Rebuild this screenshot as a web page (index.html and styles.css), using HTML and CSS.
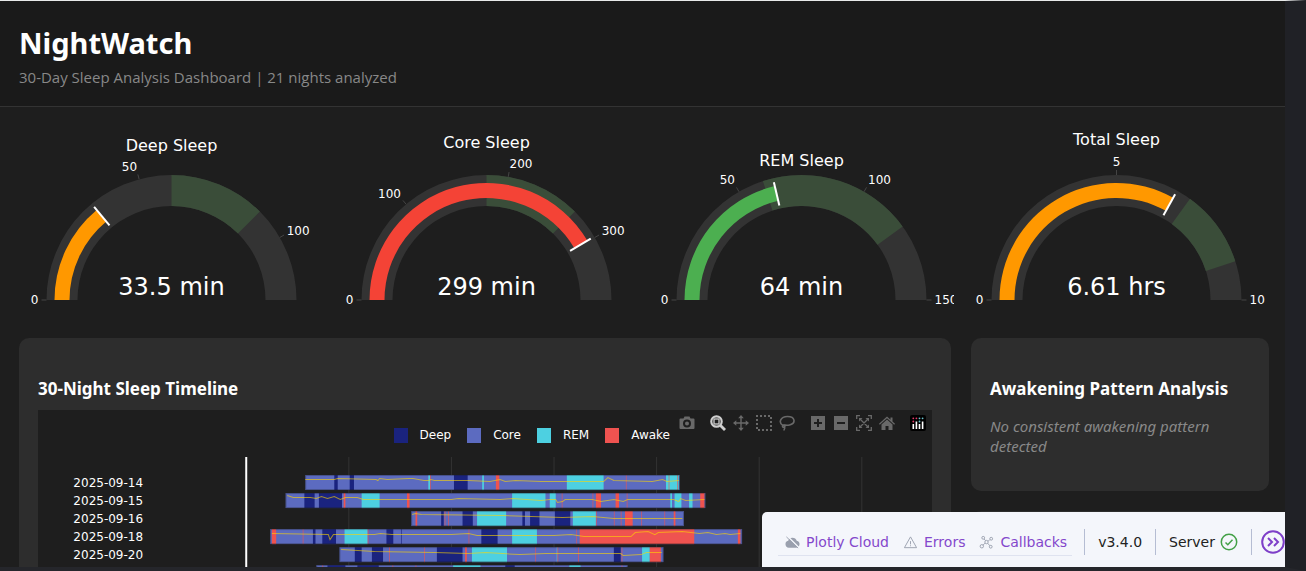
FILE: index.html
```html
<!DOCTYPE html>
<html lang="en">
<head>
    <meta charset="UTF-8">
    <meta name="viewport" content="width=device-width, initial-scale=1.0">
    <title>NightWatch</title>
    <link rel="stylesheet" href="styles.css">
</head>
<body>
    <div class="app">
        <header class="header">
            <h1>NightWatch</h1>
            <p>30-Day Sleep Analysis Dashboard | 21 nights analyzed</p>
        </header>

        <section class="gauges" id="gauges"></section>

        <main class="content">
            <section class="card">
                <h3>30-Night Sleep Timeline</h3>
                <div class="plot">
                    <div class="plot-head">
                        <ul class="legend">
                            <li><span class="swatch deep"></span>Deep</li>
                            <li><span class="swatch core"></span>Core</li>
                            <li><span class="swatch rem"></span>REM</li>
                            <li><span class="swatch awake"></span>Awake</li>
                        </ul>
                        <div class="modebar">
                            <div class="group">
                                <button aria-label="Download plot as png"><svg viewBox="0 0 16 16"><path fill-rule="evenodd" d="M1.500 3.500h3l1-2h5l1 2h3a1 1 0 0 1 1 1v8.500a1 1 0 0 1-1 1h-13a1 1 0 0 1-1-1V4.500a1 1 0 0 1 1-1zM8 4.500a4 4 0 1 0 0 8 4 4 0 0 0 0-8zm0 2a2 2 0 1 1 0 4 2 2 0 0 1 0-4z"/></svg></button>
                            </div>
                            <div class="group">
                                <button class="active" aria-label="Zoom"><svg viewBox="0 0 16 16"><circle cx="6.500" cy="6.500" r="5.200" fill="none" stroke="currentColor" stroke-width="2.200"/><path d="M9.500 11.500l2-2 4.500 4.500-2 2z"/><rect x="4" y="4" width="5" height="5" fill="none" stroke="currentColor" stroke-width="1.300"/></svg></button>
                                <button aria-label="Pan"><svg viewBox="0 0 16 16"><path d="M8 0l2.800 3.300H8.700v4h4V5.200L16 8l-3.300 2.800V8.700h-4v4h2.100L8 16l-2.800-3.300h2.100v-4h-4v2.100L0 8l3.300-2.800v2.100h4v-4H5.200z"/></svg></button>
                                <button aria-label="Box Select"><svg viewBox="0 0 16 16"><rect x="1" y="1" width="14" height="14" fill="none" stroke="currentColor" stroke-width="2" stroke-dasharray="2 2" stroke-dashoffset="1"/></svg></button>
                                <button aria-label="Lasso Select"><svg viewBox="0 0 16 16"><path fill="none" stroke="currentColor" stroke-width="1.600" d="M4 10.500C-1 7.500 1.500 1.500 8.500 1.500c8 0 8.500 7 2 8.500-3 .7-4.500 0-5.500 0-2 0-2 2.700 0 2.200 1.500-.4 1-2.500-1-2M5.500 12c.7 1.500-.5 2-.5 3.500"/></svg></button>
                            </div>
                            <div class="group">
                                <button aria-label="Zoom in"><svg viewBox="0 0 16 16"><path fill-rule="evenodd" d="M1 1h14v14H1zM7 4v3H4v2h3v3h2V9h3V7H9V4z"/></svg></button>
                                <button aria-label="Zoom out"><svg viewBox="0 0 16 16"><path fill-rule="evenodd" d="M1 1h14v14H1zM4 7v2h8V7z"/></svg></button>
                                <button aria-label="Autoscale"><svg viewBox="0 0 16 16"><path fill="none" stroke="currentColor" stroke-width="1.300" d="M.7 4V.7H4M12 .7h3.300V4M15.300 12v3.300H12M4 15.300H.7V12M4 4l8 8M12 4l-8 8"/><path d="M3 3h3.500L3 6.500zM13 3v3.500L9.500 3zM13 13H9.500L13 9.500zM3 13V9.500L6.500 13z"/></svg></button>
                                <button aria-label="Reset axes"><svg viewBox="0 0 16 16"><path d="M8 1.500l3.500 3.200V2.500h2v4L16 8.800l-.8.900L8 3.200.8 9.700 0 8.800zM8 4.500l5.500 5V15H9.500v-4h-3v4H2.500V9.500z"/></svg></button>
                            </div>
                            <div class="group">
                                <button aria-label="Produced with Plotly"><svg viewBox="0 0 16 16"><rect width="16" height="16" rx="2" fill="#000"/><g fill="#fff"><rect x="2.500" y="9" width="1.600" height="5"/><rect x="5.600" y="6.500" width="1.600" height="7.500"/><rect x="8.700" y="9" width="1.600" height="5"/><rect x="11.800" y="6.500" width="1.600" height="7.500"/></g><g fill="#e5396b"><circle cx="3.300" cy="3.300" r=".9"/><circle cx="3.300" cy="6.500" r=".9"/><circle cx="6.400" cy="3.300" r=".9"/></g><g fill="#6bc5cf"><circle cx="9.500" cy="3.300" r=".9"/><circle cx="9.500" cy="6.500" r=".9"/><circle cx="12.600" cy="3.300" r=".9"/></g></svg></button>
                            </div>
                        </div>
                    </div>
                    <svg class="timeline" id="timeline" viewBox="0 0 893 140"></svg>
                </div>
            </section>

            <aside class="side">
                <section class="card">
                    <h3>Awakening Pattern Analysis</h3>
                    <p class="empty">No consistent awakening pattern detected</p>
                </section>
                <section class="card next"></section>
            </aside>
        </main>
    </div>

    <div class="devtools">
        <nav class="links">
            <a href="#"><svg viewBox="0 0 16 16"><path fill="#9aa0ae" d="M4 13.500a3.700 3.700 0 0 1-.6-7.300A4.800 4.800 0 0 1 12.500 6a3.800 3.800 0 0 1-.5 7.500z"/><path stroke="#f4f6fb" stroke-width="1.500" d="M3 1.500l12 12"/><path stroke="#9aa0ae" d="M1.500 2l12.500 12"/></svg>Plotly Cloud</a>
            <a href="#"><svg viewBox="0 0 16 16" fill="none" stroke="#9aa0ae"><path stroke-linejoin="round" d="M8 2l6.500 11.500h-13zM8 6.500v3.500M8 11v1"/></svg>Errors</a>
            <a href="#"><svg viewBox="0 0 16 16" fill="none" stroke="#9aa0ae"><circle cx="8" cy="7.500" r="1.800"/><circle cx="4.500" cy="3" r="1.500"/><circle cx="13" cy="4" r="1.500"/><circle cx="3" cy="12" r="1.800"/><circle cx="12.500" cy="12.500" r="1.500"/><path d="M7 6L5.500 4.300M9.700 6.700l1.900-1.900M6.500 8.600l-2.200 2.200M9.300 8.800l2.200 2.600"/></svg>Callbacks</a>
        </nav>
        <span class="item">v3.4.0</span>
        <span class="item">Server <svg viewBox="0 0 18 18" fill="none" stroke="#43a047" stroke-width="1.500"><circle cx="9" cy="9" r="7.700"/><path d="M5.500 9.500l2.300 2.200 4.700-4.900"/></svg></span>
        <button class="toggle" aria-label="Collapse"><svg viewBox="0 0 24 24" fill="none" stroke="#7e3fc8" stroke-width="2"><circle cx="12" cy="12" r="10.800"/><path d="M7 8l4 4-4 4M13 8l4 4-4 4"/></svg></button>
    </div>

    <script>
        const colors = { deep: "#1a237e", core: "#5c6bc0", rem: "#4dd0e1", awake: "#ef5350" };

        const gauges = [
            { title: "Deep Sleep", value: 33.5, unit: "min", max: 120, target: [60, 90], ticks: [0, 50, 100], color: "#ff9800", titleY: 31 },
            { title: "Core Sleep", value: 299, unit: "min", max: 360, target: [180, 270], ticks: [0, 100, 200, 300], color: "#f44336", titleY: 28 },
            { title: "REM Sleep", value: 64, unit: "min", max: 150, target: [60, 120], ticks: [0, 50, 100, 150], color: "#4caf50", titleY: 46 },
            { title: "Total Sleep", value: 6.61, unit: "hrs", max: 10, target: [7, 9], ticks: [0, 5, 10], color: "#ff9800", titleY: 25 }
        ];

        const CX = 152.5;
        const CY = 180;

        // Point on the gauge for a share (0 to 1) of the half circle
        function point(share, r) {
            const angle = Math.PI * share;
            return [CX - r * Math.cos(angle), CY - r * Math.sin(angle)];
        }

        function arc(from, to, inner, outer, fill) {
            return `<path fill="${fill}" d="M${point(from, outer)}A${outer} ${outer} 0 0 1 ${point(to, outer)}L${point(to, inner)}A${inner} ${inner} 0 0 0 ${point(from, inner)}Z"/>`;
        }

        function line(share, r1, r2, cls) {
            const [x1, y1] = point(share, r1);
            const [x2, y2] = point(share, r2);
            return `<line class="${cls}" x1="${x1}" y1="${y1}" x2="${x2}" y2="${y2}"/>`;
        }

        function drawGauge(g) {
            const share = g.value / g.max;
            let out = arc(0, 1, 94, 125, "#333333");
            out += arc(g.target[0] / g.max, g.target[1] / g.max, 94, 125, "#3a4d39");
            out += arc(0, share, 102, 117, g.color);
            out += line(share, 97, 121, "needle");
            g.ticks.forEach(tick => {
                const s = tick / g.max;
                const x = point(s, 133)[0];
                const y = point(s, 138)[1] + 4;
                const anchor = s === 0.5 ? "middle" : s < 0.5 ? "end" : "start";
                out += line(s, 125, 130, "tick");
                out += `<text class="tick-label" x="${x}" y="${y}" text-anchor="${anchor}">${tick}</text>`;
            });
            out += `<text class="gauge-title" x="${CX}" y="${g.titleY}">${g.title}</text>`;
            out += `<text class="gauge-value" x="${CX}" y="175">${g.value} ${g.unit}</text>`;
            return `<svg class="gauge" viewBox="0 0 305 200">${out}</svg>`;
        }

        document.getElementById("gauges").innerHTML = gauges.map(drawGauge).join("");

        // Nights: minutes on the time axis. Everything not listed is core sleep.
        const nights = [
            {
                date: "2025-09-14", start: 69, end: 507,
                deep: [[103, 107], [121, 126], [243, 259]],
                rem: [[213, 215], [276, 278], [375, 418], [491, 506]],
                awake: [[215, 216], [292, 296], [444, 445], [494, 495], [504, 505]],
                hr: [[69, 4], [103, 4], [107, 3], [152, 4], [154, 5], [156, 3], [165, 4], [190, 3], [195, 3], [208, 5], [213, 5], [216, 4], [220, 5], [260, 5], [285, 6], [297, 4], [303, 6], [315, 5], [345, 6], [418, 6], [423, 2], [430, 5], [475, 6], [487, 4], [492, 6], [506, 5]]
            },
            {
                date: "2025-09-15", start: 46, end: 537,
                deep: [[68, 80], [85, 112]],
                rem: [[135, 156], [311, 350], [355, 362], [496, 498], [501, 509], [518, 522]],
                awake: [[114, 116], [188, 191], [369, 370], [405, 406], [409, 415], [432, 436], [445, 446], [531, 536]],
                hr: [[48, 2], [55, 4], [75, 4], [82, 5], [88, 3], [95, 5], [103, 3], [110, 6], [116, 4], [130, 4], [137, 6], [240, 6], [248, 5], [297, 6], [311, 5], [345, 7], [355, 6], [362, 6], [364, 9], [370, 8], [373, 6], [405, 6], [415, 8], [430, 6], [441, 8], [446, 6], [500, 6], [506, 8], [508, 5], [514, 7], [536, 6]]
            },
            {
                date: "2025-09-16", start: 193, end: 512,
                deep: [[228, 231], [253, 265], [323, 326], [332, 343], [361, 379]],
                rem: [[270, 304], [382, 409]],
                awake: [[198, 200], [232, 233], [236, 237], [409, 410], [430, 431], [438, 439], [443, 452], [462, 463], [489, 490], [500, 502]],
                hr: [[194, 3], [198, 2], [205, 3], [300, 4], [370, 6], [405, 5], [430, 7], [510, 7]]
            },
            {
                date: "2025-09-18", start: 28, end: 580,
                deep: [[78, 81], [89, 105], [164, 172], [181, 182], [275, 294]],
                rem: [[115, 142], [311, 340]],
                awake: [[30, 35], [66, 67], [142, 143], [260, 261], [386, 387], [390, 524], [575, 578]],
                hr: [[30, 4], [96, 5], [98, 10], [102, 5], [150, 5], [157, 4], [170, 5], [240, 5], [260, 4], [270, 6], [360, 6], [380, 5], [395, 7], [450, 7], [455, 3], [470, 2], [478, 5], [482, 3], [510, 2], [530, 4], [540, 3], [550, 5], [560, 4], [566, 5], [578, 4]]
            },
            {
                date: "2025-09-20", start: 109, end: 488,
                deep: [[127, 135], [147, 160], [223, 253], [430, 438]],
                rem: [[264, 305], [363, 364], [463, 472]],
                awake: [[167, 168], [208, 209], [256, 258], [338, 339], [364, 365], [388, 389], [439, 440], [472, 485]],
                hr: [[111, 2], [150, 4], [220, 5], [260, 6], [280, 5], [300, 6], [320, 7], [350, 6], [438, 6], [441, 8], [462, 7], [468, 5], [486, 5]]
            },
            {
                date: "", start: 82, end: 446,
                deep: [[95, 116], [130, 155], [303, 314]],
                rem: [[242, 274], [378, 391]],
                awake: [[89, 90], [171, 172], [198, 199], [439, 440]],
                hr: [[84, 6], [444, 6]]
            }
        ];

        const AXIS_X = 208;
        const PX_PER_MIN = 0.854;
        const ROW = 18;
        const toX = min => AXIS_X + min * PX_PER_MIN;

        function drawSegment(from, to, y, stage) {
            const thin = to - from === 1 ? ' opacity="0.7"' : "";
            return `<rect x="${toX(from)}" y="${y}" width="${(to - from) * PX_PER_MIN}" height="15" fill="${colors[stage]}"${thin}/>`;
        }

        function drawTimeline() {
            let out = "";
            for (let min = 120; min <= 720; min += 120) {
                out += `<line class="grid" x1="${toX(min)}" x2="${toX(min)}" y1="0" y2="140"/>`;
            }
            nights.forEach((night, i) => {
                const y = 18 + i * ROW;
                if (night.date) {
                    out += `<text class="date" x="105" y="${y + 12}">${night.date}</text>`;
                }
                out += drawSegment(night.start, night.end, y, "core");
                ["deep", "rem", "awake"].forEach(stage => {
                    night[stage].forEach(([from, to]) => out += drawSegment(from, to, y, stage));
                });
                out += `<rect class="outline" x="${toX(night.start) + 0.5}" y="${y + 0.5}" width="${(night.end - night.start) * PX_PER_MIN - 1}" height="14"/>`;
                out += `<polyline class="hr" points="${night.hr.map(([min, dy]) => [toX(min), y + dy + 0.5]).join(" ")}"/>`;
            });
            out += `<line class="axis" x1="${AXIS_X}" x2="${AXIS_X}" y1="0" y2="140"/>`;
            document.getElementById("timeline").innerHTML = out;
        }

        drawTimeline();
    </script>
</body>
</html>
```
FILE: styles.css
```css
* {
    box-sizing: border-box;
}

body {
    margin: 0;
    height: 100vh;
    overflow: hidden;
    background-color: #1e1e1e;
    border-top: 1px solid #e8eaea;
    border-right: 21px solid #202126;
    border-bottom: 4px solid #25262b;
    color: #fff;
    font-family: "Segoe UI", "Noto Sans", sans-serif;
}

.app {
    height: 100%;
    overflow: hidden;
}

.header {
    background-color: #1a1a1a;
    border-bottom: 1px solid #333;
    padding: 20px 19px;
    height: 106px;
}

.header h1 {
    margin: 0;
    font-size: 29px;
    line-height: 44px;
}

.header p {
    margin: 0;
    color: #888;
    font-family: "Segoe UI", "Open Sans", sans-serif;
    font-size: 15px;
    line-height: 24px;
}

.gauges {
    display: grid;
    grid-template-columns: repeat(4, 1fr);
    gap: 10px;
    padding: 13px 16px 18px 19px;
}

.gauge {
    display: block;
    width: 100%;
    overflow: hidden;
}

.gauge text {
    font-family: Verdana, "DejaVu Sans", sans-serif;
    fill: #fff;
}

.gauge .tick-label {
    font-size: 12px;
}

.gauge .gauge-title {
    font-size: 16px;
    text-anchor: middle;
}

.gauge .gauge-value {
    font-size: 24px;
    text-anchor: middle;
}

.tick {
    stroke: #444;
}

.needle {
    stroke: #fff;
    stroke-width: 2;
}

.content {
    display: grid;
    grid-template-columns: 1fr 298px;
    gap: 20px;
    padding: 0 16px 20px 19px;
}

.card {
    background-color: #2d2d2d;
    border-radius: 10px;
    padding: 20px 19px;
}

.card h3 {
    margin: 18px 0 8px;
    font-size: 17px;
    line-height: 26px;
}

.side {
    display: flex;
    flex-direction: column;
    gap: 20px;
}

.side .next {
    flex: 1;
}

.empty {
    margin: 0 0 15px;
    padding-top: 6px;
    color: #888;
    font-size: 15px;
    font-style: italic;
    line-height: 20px;
}

.plot {
    background-color: #1e1e1e;
}

.plot-head {
    display: flex;
    align-items: flex-start;
    justify-content: flex-end;
    gap: 5px;
    height: 47px;
    padding-right: 3px;
}

.legend {
    display: flex;
    gap: 16px;
    margin: 17px 0 0;
    padding: 0;
    list-style: none;
    font-family: Verdana, "DejaVu Sans", sans-serif;
    font-size: 12px;
    line-height: 16px;
}

.legend li {
    display: flex;
    align-items: center;
    gap: 12px;
}

.swatch {
    width: 14px;
    height: 15px;
}

.deep {
    background-color: #1a237e;
}

.core {
    background-color: #5c6bc0;
}

.rem {
    background-color: #4dd0e1;
}

.awake {
    background-color: #ef5350;
}

.modebar {
    display: flex;
    gap: 8px;
}

.group {
    display: flex;
    padding-top: 4px;
}

.modebar button {
    width: 23px;
    height: 18px;
    padding: 0;
    border: none;
    background: none;
    color: #696969;
    cursor: pointer;
}

.modebar button.active {
    color: #cfcfcf;
}

.modebar svg {
    display: block;
    width: 16px;
    height: 16px;
    margin: 0 auto;
    fill: currentColor;
}

.timeline {
    display: block;
    width: 100%;
}

.date {
    font-family: Verdana, "DejaVu Sans", sans-serif;
    font-size: 12px;
    fill: #fff;
    text-anchor: end;
}

.grid {
    stroke: #333;
}

.axis {
    stroke: #fff;
    stroke-width: 2;
}

.outline {
    fill: none;
    stroke: #1e1e1e;
    stroke-opacity: 0.3;
}

.hr {
    fill: none;
    stroke: #ffd700;
    stroke-opacity: 0.6;
}

.devtools {
    position: fixed;
    right: 21px;
    bottom: 4px;
    display: flex;
    align-items: flex-start;
    width: 523px;
    height: 55px;
    padding: 17px 0 0 16px;
    overflow: hidden;
    background-color: #f4f6fb;
    border-top-left-radius: 5px;
    color: #222;
    font-family: Verdana, "DejaVu Sans", sans-serif;
    font-size: 14px;
    line-height: 26px;
}

.links {
    display: flex;
    gap: 14px;
    width: 295px;
    margin-right: 12px;
    padding-left: 7px;
    border-bottom: 1px solid #dfe3f0;
    white-space: nowrap;
}

.links a {
    display: flex;
    align-items: center;
    gap: 6px;
    color: #8448cc;
    text-decoration: none;
}

.links svg {
    width: 15px;
    height: 15px;
}

.item {
    display: flex;
    align-items: center;
    gap: 5px;
    padding: 0 13px;
    border-left: 1px solid #b5bdd3;
    white-space: nowrap;
}

.item svg {
    width: 18px;
    height: 18px;
}

.toggle {
    flex: none;
    height: 26px;
    padding: 0 0 0 9px;
    border: none;
    border-left: 1px solid #b5bdd3;
    background: none;
    cursor: pointer;
}

.toggle svg {
    display: block;
    width: 24px;
    height: 24px;
}
```
